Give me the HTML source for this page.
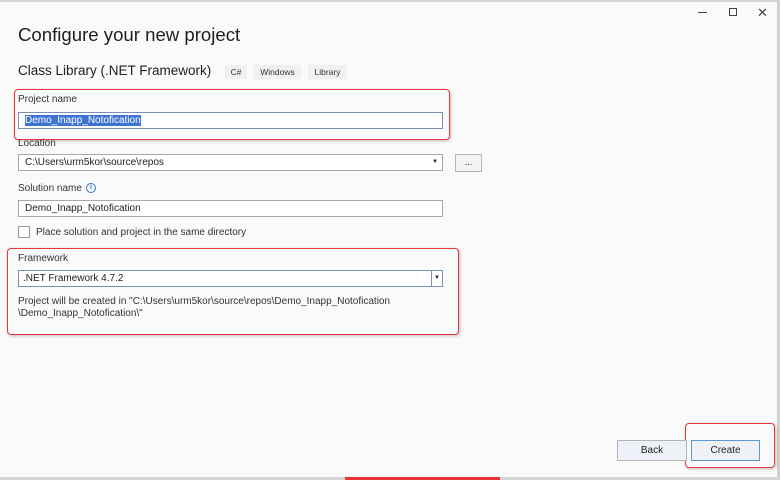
<!DOCTYPE html>
<html><head><style>
*{margin:0;padding:0;box-sizing:border-box}
body{width:780px;height:480px;background:#fafafa;position:relative;overflow:hidden;font-family:"Liberation Sans",sans-serif;color:#1e1e1e}
.a{position:absolute}
.lbl{font-size:10px;color:#333}
.inp{border:1px solid #a8a8a8;background:#fff;height:17px;font-size:10px;padding-left:6px;line-height:15px}
.tag{background:#f0f0f0;font-size:8.5px;color:#333;text-align:center;line-height:14px;height:14px}
.red{border:1.5px solid #e8343a;border-radius:4px;box-shadow:1px 1px 3px rgba(0,0,0,.25)}
.btn{border:1px solid #b5b5b5;background:#eef2f8;font-size:10px;text-align:center;line-height:19px;height:21px}
</style></head><body>
<div class="a" style="left:0;top:0;width:780px;height:2px;background:#d8d8d8"></div>
<div class="a" style="left:777px;top:0;width:3px;height:480px;background:#d0d0d0"></div>
<div class="a" style="left:0;top:477px;width:780px;height:3px;background:#d6d6d6"></div>
<div class="a" style="left:345px;top:477px;width:155px;height:3px;background:#e8343a"></div>
<div class="a" style="left:698px;top:12px;width:9px;height:1px;background:#444"></div>
<div class="a" style="left:729px;top:8px;width:8px;height:8px;border:1px solid #444"></div>
<div class="a" style="left:757px;top:5px;font-size:13px;color:#444">✕</div>

<div class="a" style="left:18px;top:24px;font-size:18.6px;color:#1e1e1e">Configure your new project</div>
<div class="a" style="left:18px;top:63px;font-size:13.5px">Class Library (.NET Framework)</div>
<div class="a tag" style="left:225px;top:65px;width:22px">C#</div>
<div class="a tag" style="left:254px;top:65px;width:47px">Windows</div>
<div class="a tag" style="left:308px;top:65px;width:39px">Library</div>

<div class="a red" style="left:14px;top:89px;width:436px;height:51px"></div>
<div class="a lbl" style="left:18px;top:94px">Project name</div>
<div class="a inp" style="left:18px;top:112px;width:425px;border-color:#7a8fb8"><span style="background:#3d74d1;color:#fff">Demo_Inapp_Notofication</span></div>

<div class="a lbl" style="left:18px;top:138px">Location</div>
<div class="a inp" style="left:18px;top:154px;width:425px">C:\Users\urm5kor\source\repos<span style="position:absolute;right:4px;top:0;font-size:6px">▼</span></div>
<div class="a" style="left:455px;top:154px;width:27px;height:18px;border:1px solid #b5b5b5;background:#f4f4f4;font-size:9px;text-align:center;line-height:15px">...</div>

<div class="a lbl" style="left:18px;top:183px">Solution name</div>
<div class="a" style="left:86px;top:183px;width:10px;height:10px;border:1px solid #2d7bd0;border-radius:50%;font-size:7px;color:#2d7bd0;text-align:center;line-height:8px;font-weight:bold">i</div>
<div class="a inp" style="left:18px;top:200px;width:425px">Demo_Inapp_Notofication</div>
<div class="a" style="left:18px;top:226px;width:12px;height:12px;border:1px solid #999;background:#fff"></div>
<div class="a lbl" style="left:36px;top:227px">Place solution and project in the same directory</div>

<div class="a red" style="left:7px;top:248px;width:452px;height:87px"></div>
<div class="a lbl" style="left:18px;top:253px">Framework</div>
<div class="a inp" style="left:18px;top:270px;width:425px;border-color:#7a8fb8;padding-left:4px">.NET Framework 4.7.2<span style="position:absolute;right:0;top:0;width:11px;height:15px;border-left:1px solid #7a8fb8;font-size:6px;text-align:center">▼</span></div>
<div class="a lbl" style="left:18px;top:296px;line-height:12px">Project will be created in "C:\Users\urm5kor\source\repos\Demo_Inapp_Notofication<br>\Demo_Inapp_Notofication\"</div>

<div class="a red" style="left:685px;top:423px;width:90px;height:45px"></div>
<div class="a btn" style="left:617px;top:440px;width:70px">Back</div>
<div class="a btn" style="left:691px;top:440px;width:69px;border-color:#5d9ad8">Create</div>
</body></html>
